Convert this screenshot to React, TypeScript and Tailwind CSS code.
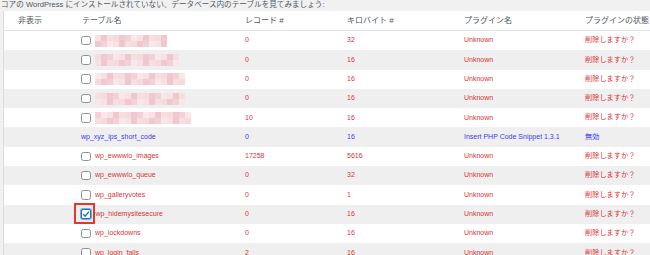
import React from "react";

// Mosaic colours used to mimic the pixelated table names
const MOSAIC = ["#f7e1e3", "#f2d2d6", "#f5dbde", "#efc8cd", "#f9e7e9", "#f0c9ce", "#f6dee1"];

type Row = {
  name?: string;
  blur?: number;
  noBox?: boolean;
  checked?: boolean;
  records: string;
  kb: string;
  plugin: string;
  status: string;
  blue?: boolean;
};

const ROWS: Row[] = [
  { blur: 70, records: "0", kb: "32", plugin: "Unknown", status: "削除しますか？" },
  { blur: 84, records: "0", kb: "16", plugin: "Unknown", status: "削除しますか？" },
  { blur: 88, records: "0", kb: "16", plugin: "Unknown", status: "削除しますか？" },
  { blur: 88, records: "0", kb: "16", plugin: "Unknown", status: "削除しますか？" },
  { blur: 92, records: "10", kb: "16", plugin: "Unknown", status: "削除しますか？" },
  { name: "wp_xyz_ips_short_code", noBox: true, records: "0", kb: "16", plugin: "Insert PHP Code Snippet 1.3.1", status: "無効", blue: true },
  { name: "wp_ewwwio_images", records: "17258", kb: "5616", plugin: "Unknown", status: "削除しますか？" },
  { name: "wp_ewwwio_queue", records: "0", kb: "32", plugin: "Unknown", status: "削除しますか？" },
  { name: "wp_galleryvotes", records: "0", kb: "1", plugin: "Unknown", status: "削除しますか？" },
  { name: "wp_hidemysitesecure", checked: true, records: "0", kb: "16", plugin: "Unknown", status: "削除しますか？" },
  { name: "wp_lockdowns", records: "0", kb: "16", plugin: "Unknown", status: "削除しますか？" },
  { name: "wp_login_fails", records: "2", kb: "16", plugin: "Unknown", status: "削除しますか？" },
];

function Mosaic({ width, seed }: { width: number; seed: number }) {
  const cols = Math.ceil(width / 6);
  const cells = [];
  for (let r = 0; r < 2; r++) {
    for (let c = 0; c < cols; c++) {
      cells.push(
        <div
          key={`${r}-${c}`}
          className="h-[6px] w-[6px]"
          style={{ backgroundColor: MOSAIC[(c * 3 + r * 5 + seed * 2) % MOSAIC.length] }}
        />
      );
    }
  }
  return (
    <div className="flex flex-wrap" style={{ width: cols * 6 }}>
      {cells}
    </div>
  );
}

function Checkbox({ checked }: { checked?: boolean }) {
  if (checked) {
    return (
      <div className="relative">
        <div className="flex h-[10px] w-[10px] items-center justify-center rounded-[2px] border border-[#2271b1] bg-white shadow-[0_0_0_1px_#72aee6]">
          <svg width="8" height="8" viewBox="0 0 8 8">
            <polyline points="1.2,4.2 3.2,6.2 6.9,1.6" fill="none" stroke="#2271b1" strokeWidth="1.4" />
          </svg>
        </div>
        {/* red annotation box */}
        <div className="absolute left-[-7px] top-[-6px] h-[21px] w-[21px] border-[2.5px] border-[#e8362a]" />
      </div>
    );
  }
  return <div className="h-[9.5px] w-[9.5px] rounded-[2.5px] border border-[#8c8f94] bg-white" />;
}

export default function App() {
  return (
    <div
      className="h-[255px] w-[650px] overflow-hidden bg-[#f1f1f1] text-[#50575e]"
      style={{ fontFamily: '"Liberation Sans", "Noto Sans CJK JP", sans-serif' }}
    >
      <div className="h-[11px] overflow-hidden whitespace-nowrap pl-[1px] text-[7.6px] leading-[10px] text-[#50575e]">
        コアの WordPress にインストールされていない、データベース内のテーブルを見てみましょう:
      </div>

      <div className="ml-[3px] border-l border-[#dcdcde] bg-white">
        {/* Header */}
        <div className="grid h-[20px] grid-cols-[77px_164px_102px_117px_121px_1fr] items-center border-b border-[#e2e4e7] text-[8px]">
          <div className="pl-[14px]">非表示</div>
          <div className="pl-[1px]">テーブル名</div>
          <div>レコード #</div>
          <div>キロバイト #</div>
          <div>プラグイン名</div>
          <div className="whitespace-nowrap">プラグインの状態</div>
        </div>

        {/* Rows */}
        {ROWS.map((row, i) => {
          const color = row.blue ? "text-[#3b3bf2]" : "text-[#d63638]";
          return (
            <div
              key={i}
              className={`grid h-[19.3px] grid-cols-[77px_164px_102px_117px_121px_1fr] items-center text-[7px] ${
                i % 2 === 1 ? "bg-[#efefef]" : "bg-white"
              } ${color}`}
            >
              <div />
              <div className="flex items-center">
                {!row.noBox && (
                  <div className="mr-[4.5px]">
                    <Checkbox checked={row.checked} />
                  </div>
                )}
                {row.blur ? <Mosaic width={row.blur} seed={i} /> : <span>{row.name}</span>}
              </div>
              <div>{row.records}</div>
              <div>{row.kb}</div>
              <div className="whitespace-nowrap">{row.plugin}</div>
              <div className="whitespace-nowrap text-[7.2px]">{row.status}</div>
            </div>
          );
        })}
      </div>
    </div>
  );
}
